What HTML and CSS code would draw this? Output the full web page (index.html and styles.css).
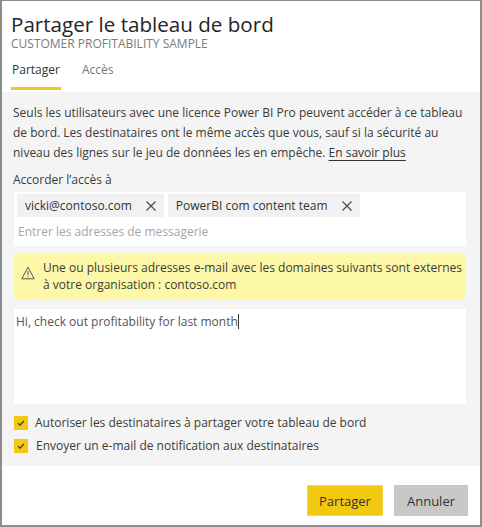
FILE: index.html
```html
<!DOCTYPE html>
<html lang="fr">
<head>
<meta charset="utf-8">
<link rel="stylesheet" href="styles.css">
</head>
<body>
<div class="dialog">
  <header class="head">
    <h1 class="title">Partager le tableau de bord</h1>
    <div class="subtitle">CUSTOMER PROFITABILITY SAMPLE</div>
    <nav class="tabs">
      <span class="tab active">Partager</span>
      <span class="tab">Accès</span>
    </nav>
  </header>
  <section class="content">
    <p class="info">Seuls les utilisateurs avec une licence Power BI Pro peuvent accéder à ce tableau de bord. Les destinataires ont le même accès que vous, sauf si la sécurité au niveau des lignes sur le jeu de données les en empêche. <a class="link">En savoir plus</a></p>
    <div class="label">Accorder l’accès à</div>
    <div class="recipients">
      <div class="chips">
        <span class="chip">vicki@contoso.com<svg class="x" viewBox="0 0 10 10"><path d="M0.5 0.5L9.5 9.5M9.5 0.5L0.5 9.5"/></svg></span>
        <span class="chip">PowerBI com content team<svg class="x" viewBox="0 0 10 10"><path d="M0.5 0.5L9.5 9.5M9.5 0.5L0.5 9.5"/></svg></span>
      </div>
      <div class="placeholder">Entrer les adresses de messagerie</div>
    </div>
    <div class="warning">
      <svg class="warn-icon" viewBox="0 0 14 14"><path d="M7 1.2L13.2 12.8H0.8Z"/><path d="M7 5v4.2M7 10.4v1.1"/></svg>
      <div class="warn-text"><span class="nw">Une ou plusieurs adresses e-mail avec les domaines suivants sont externes</span><br>à votre organisation : contoso.com</div>
    </div>
    <div class="message">Hi, check out profitability for last month<span class="caret"></span></div>
    <div class="checks">
      <div class="check"><span class="box"><svg viewBox="0 0 14 14"><path d="M4 7.2l2 2 4-4.2"/></svg></span><span class="check-label">Autoriser les destinataires à partager votre tableau de bord</span></div>
      <div class="check second"><span class="box"><svg viewBox="0 0 14 14"><path d="M4 7.2l2 2 4-4.2"/></svg></span><span class="check-label">Envoyer un e-mail de notification aux destinataires</span></div>
    </div>
  </section>
  <footer class="foot">
    <button class="btn primary">Partager</button>
    <button class="btn secondary">Annuler</button>
  </footer>
</div>
</body>
</html>
```

FILE: styles.css
```css
* { box-sizing: border-box; }
html, body { margin: 0; padding: 0; background: #fff; }
body { font-family: "Open Sans", "Noto Sans", sans-serif; color: #333; }

.dialog {
  width: 482px;
  height: 527px;
  border: 2px solid #8c8c8c;
  border-top-width: 1px;
  display: flex;
  flex-direction: column;
  background: #fff;
}

.head { padding: 10px 10px 0 9px; }
.title {
  margin: 0;
  font-size: 20.6px;
  line-height: 26px;
  font-weight: 400;
  color: #252525;
}
.subtitle {
  font-size: 12px;
  line-height: 14px;
  color: #7a7a7a;
}
.tabs {
  display: flex;
  gap: 20px;
  margin-top: 9px;
  margin-bottom: 2px;
}
.tab {
  font-size: 12px;
  line-height: 20px;
  padding: 0 1px 7px 1px;
  border-bottom: 3px solid transparent;
  color: #767676;
}
.tab.active { color: #333; border-bottom-color: #f2c811; }

.content {
  background: #f4f4f4;
  padding: 11px 14px 10px 10px;
}
.info {
  margin: 0 0 0 1px;
  font-size: 12px;
  line-height: 20px;
  color: #3b3b3b;
}
.link { color: #333; text-decoration: underline; text-underline-offset: 3px; }
.label {
  margin: 7px 0 2px 1px;
  font-size: 12px;
  line-height: 20px;
  color: #3b3b3b;
}

.recipients {
  background: #fff;
  height: 54px;
  margin-left: 2px;
  padding: 2px 4px 3px 3px;
}
.chips { display: flex; gap: 4px; }
.chip {
  display: flex;
  align-items: center;
  height: 23px;
  padding: 0 8px;
  background: #f1f1f1;
  font-size: 12px;
  color: #333;
}
.x {
  width: 10px;
  height: 10px;
  margin-left: 14px;
  fill: none;
  stroke: #444;
  stroke-width: 1.1;
}
.placeholder {
  margin-top: 5px;
  padding-left: 1px;
  font-size: 12px;
  line-height: 20px;
  color: #a6a6a6;
}

.warning {
  display: flex;
  align-items: flex-start;
  gap: 8px;
  margin-top: 8px;
  margin-left: 2px;
  padding: 5px 4px 6px 7px;
  background: #fcf8a8;
  font-size: 12px;
  line-height: 17px;
  color: #3b3b3b;
}
.warn-text { flex: 1 1 0; min-width: 0; }
.nw { white-space: nowrap; }
.warn-icon {
  flex: none;
  width: 14px;
  height: 14px;
  margin-top: 7px;
  fill: none;
  stroke: #555;
  stroke-width: 1;
}

.message {
  margin-top: 10px;
  margin-left: 2px;
  height: 95px;
  background: #fff;
  padding: 3px 2px;
  font-size: 12px;
  line-height: 20px;
  color: #555;
}
.caret {
  display: inline-block;
  width: 1px;
  height: 15px;
  background: #333;
  vertical-align: -3px;
}

.checks { margin-top: 9px; display: flex; flex-direction: column; gap: 3px; }
.check { display: flex; align-items: center; height: 20px; gap: 7px; margin-left: 2px; }
.check.second .check-label { margin-left: 1px; }
.box {
  width: 14px;
  height: 14px;
  background: #f2c811;
  display: flex;
}
.box svg { width: 14px; height: 14px; fill: none; stroke: #333; stroke-width: 1.1; }
.check-label { font-size: 12px; line-height: 20px; color: #3b3b3b; }

.foot {
  flex: 1;
  display: flex;
  justify-content: flex-end;
  align-items: flex-start;
  gap: 11px;
  padding: 19px 12px 0 0;
}
.btn {
  height: 31px;
  border: none;
  font-family: inherit;
  font-size: 13px;
  color: #333;
  padding: 0;
}
.primary { width: 76px; background: #f2c811; border: 1px solid #f7d84a; }
.secondary { width: 74px; background: #c8c8c8; }
```
